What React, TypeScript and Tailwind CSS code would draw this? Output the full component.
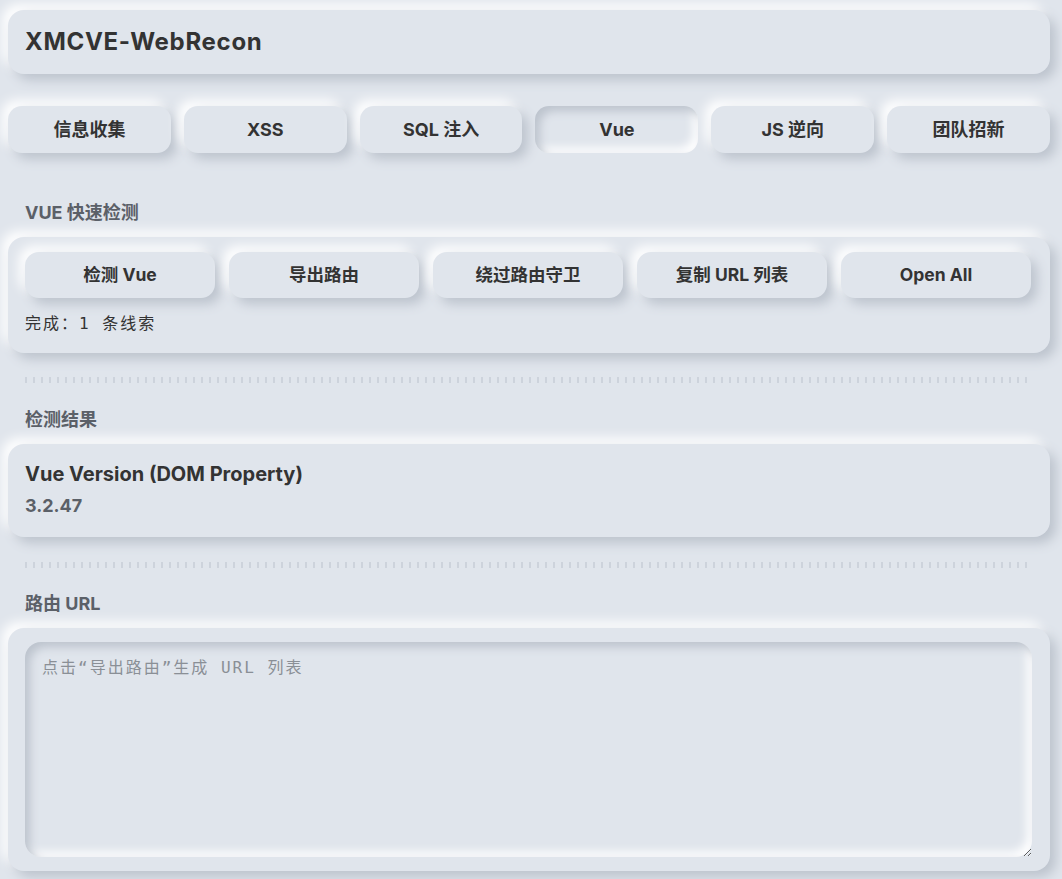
import React from "react";

const sans = "font-['Inter','Noto_Sans_CJK_SC',sans-serif]";
const raised = "bg-[#e0e5ec] shadow-[6px_6px_12px_#bcc3cd,-6px_-6px_12px_#ffffff]";
const inset = "bg-[#e0e5ec] shadow-[inset_5px_5px_10px_#bcc3cd,inset_-5px_-5px_10px_#ffffff]";

function Divider() {
  return (
    <div className="mx-[17px] h-[6px] bg-[repeating-linear-gradient(90deg,#cdd3dc_0px,#cdd3dc_2px,transparent_2px,transparent_8px)]" />
  );
}

function Label({ children, className = "" }: { children: React.ReactNode; className?: string }) {
  return (
    <div className={`px-[17px] text-[18px] leading-[24px] font-bold text-[#5b6068] ${className}`}>{children}</div>
  );
}

export default function App() {
  const tabs = ["信息收集", "XSS", "SQL 注入", "Vue", "JS 逆向", "团队招新"];
  const btns = ["检测 Vue", "导出路由", "绕过路由守卫", "复制 URL 列表", "Open All"];
  return (
    <div className={`min-h-[900px] bg-[#e0e5ec] pl-[8px] pr-[12px] pt-[10px] pb-[20px] ${sans} text-[#333]`}>
      <div className={`${raised} h-16 rounded-2xl px-[17px] flex items-center`}>
        <h1 className="text-[24px] font-bold tracking-[0.7px] text-[#333]">XMCVE-WebRecon</h1>
      </div>

      <div className="mt-8 grid grid-cols-6 gap-[13px]">
        {tabs.map((t) => (
          <div
            key={t}
            className={`${t === "Vue" ? inset : raised} h-[47px] rounded-[14px] flex items-center justify-center text-[18px] font-bold text-[#333]`}
          >
            {t}
          </div>
        ))}
      </div>

      <Label className="mt-[48px]">VUE 快速检测</Label>
      <div className={`${raised} mt-[12px] rounded-2xl pl-[17px] pr-[19px] pt-[15px] pb-[17px]`}>
        <div className="grid grid-cols-5 gap-[14px]">
          {btns.map((b) => (
            <div
              key={b}
              className={`${raised} h-[46px] rounded-[14px] flex items-center justify-center text-[17.5px] font-bold text-[#333]`}
            >
              {b}
            </div>
          ))}
        </div>
        <div className="mt-[14px] text-[16px] leading-[24px] tracking-[2px] text-[#333] font-['DejaVu_Sans_Mono','Noto_Sans_CJK_SC',monospace]">
          完成：1 条线索
        </div>
      </div>

      <div className="mt-[24px]">
        <Divider />
      </div>

      <Label className="mt-[25px]">检测结果</Label>
      <div className={`${raised} mt-[12px] rounded-2xl px-[17px] pt-[17px] pb-[19px]`}>
        <div className="text-[20px] leading-[26px] font-bold text-[#333]">Vue Version (DOM Property)</div>
        <div className="mt-[7px] text-[18px] leading-[24px] font-bold text-[#5b6068]">3.2.47</div>
      </div>

      <div className="mt-[25px]">
        <Divider />
      </div>

      <Label className="mt-[24px]">路由 URL</Label>
      <div className={`${raised} mt-[12px] rounded-2xl pl-[17px] pr-[18px] pt-[14px] pb-[14px]`}>
        <textarea
          placeholder="点击“导出路由”生成 URL 列表"
          className={`${inset} block w-full h-[215px] rounded-2xl px-[17px] pt-[14px] text-[16px] leading-[24px] tracking-[2px] outline-none border-0 resize-y text-[#333] placeholder:text-[#8a8f96] font-['DejaVu_Sans_Mono','Noto_Sans_CJK_SC',monospace]`}
        />
      </div>
    </div>
  );
}
